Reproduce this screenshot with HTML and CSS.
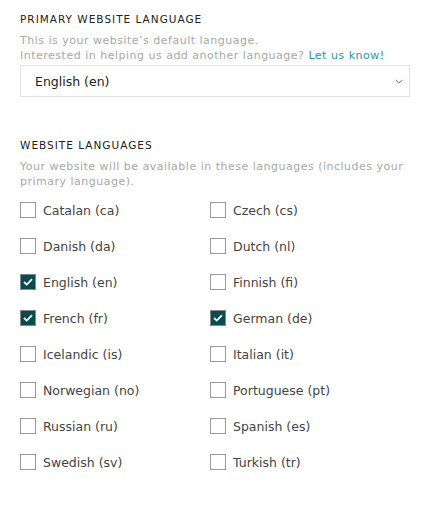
FILE: index.html
```html
<!DOCTYPE html>
<html lang="en">
<head>
<meta charset="utf-8">
<title>Languages</title>
<link rel="stylesheet" href="styles.css">
</head>
<body>
<div class="page">
  <section class="section">
    <h2 class="heading">PRIMARY WEBSITE LANGUAGE</h2>
    <p class="help">This is your website’s default language.<br>Interested in helping us add another language? <a class="link" href="#">Let us know!</a></p>
    <div class="select">
      <span class="select-value">English (en)</span>
      <svg class="chevron" width="8" height="5" viewBox="0 0 8 5"><path d="M0.8 0.8 L4 4 L7.2 0.8" fill="none" stroke="#999" stroke-width="1.1"/></svg>
    </div>
  </section>
  <section class="section second">
    <h2 class="heading">WEBSITE LANGUAGES</h2>
    <p class="help">Your website will be available in these languages (includes your primary language).</p>
    <div class="grid">
      <label class="opt"><span class="box"></span>Catalan (ca)</label>
      <label class="opt"><span class="box"></span>Czech (cs)</label>
      <label class="opt"><span class="box"></span>Danish (da)</label>
      <label class="opt"><span class="box"></span>Dutch (nl)</label>
      <label class="opt"><span class="box checked"><svg width="10" height="8" viewBox="0 0 10 8"><path d="M1 4 L3.8 6.6 L9 1.2" fill="none" stroke="#fff" stroke-width="1.8"/></svg></span>English (en)</label>
      <label class="opt"><span class="box"></span>Finnish (fi)</label>
      <label class="opt"><span class="box checked"><svg width="10" height="8" viewBox="0 0 10 8"><path d="M1 4 L3.8 6.6 L9 1.2" fill="none" stroke="#fff" stroke-width="1.8"/></svg></span>French (fr)</label>
      <label class="opt"><span class="box checked"><svg width="10" height="8" viewBox="0 0 10 8"><path d="M1 4 L3.8 6.6 L9 1.2" fill="none" stroke="#fff" stroke-width="1.8"/></svg></span>German (de)</label>
      <label class="opt"><span class="box"></span>Icelandic (is)</label>
      <label class="opt"><span class="box"></span>Italian (it)</label>
      <label class="opt"><span class="box"></span>Norwegian (no)</label>
      <label class="opt"><span class="box"></span>Portuguese (pt)</label>
      <label class="opt"><span class="box"></span>Russian (ru)</label>
      <label class="opt"><span class="box"></span>Spanish (es)</label>
      <label class="opt"><span class="box"></span>Swedish (sv)</label>
      <label class="opt"><span class="box"></span>Turkish (tr)</label>
    </div>
  </section>
</div>
</body>
</html>
```
FILE: styles.css
```css
html, body { margin: 0; padding: 0; background: #fff; }
body { font-family: "DejaVu Sans", "Open Sans", sans-serif; color: #333; }
.page { padding: 12px 20px 0 20px; }
.section { display: flex; flex-direction: column; }
.second { margin-top: 41px; }
.heading {
  margin: 0;
  font-size: 10.5px;
  font-weight: normal;
  letter-spacing: 1px;
  color: #222;
  line-height: 14px;
}
.help {
  margin: 7px 0 0 0;
  font-size: 11px;
  letter-spacing: 0.5px;
  line-height: 15px;
  color: #a8a8a8;
}
.link { color: #2a9aa0; text-decoration: none; }
.select {
  margin-top: 2px;
  height: 29px;
  border: 1px solid #e3e3e3;
  display: flex;
  align-items: center;
  justify-content: space-between;
  padding: 1px 6px 0 14px;
}
.select-value { font-size: 12.5px; color: #222; }
.grid {
  margin-top: 12px;
  display: grid;
  grid-template-columns: 190px 1fr;
  grid-auto-rows: 36px;
}
.opt {
  display: flex;
  align-items: center;
  gap: 7px;
  font-size: 12.5px;
  color: #444;
  height: 18px;
}
.box {
  width: 14px;
  height: 14px;
  border: 1px solid #999;
  box-sizing: content-box;
  display: flex;
  align-items: center;
  justify-content: center;
  flex: none;
}
.box.checked { background: #0a4b52; border-color: #888; }
```
